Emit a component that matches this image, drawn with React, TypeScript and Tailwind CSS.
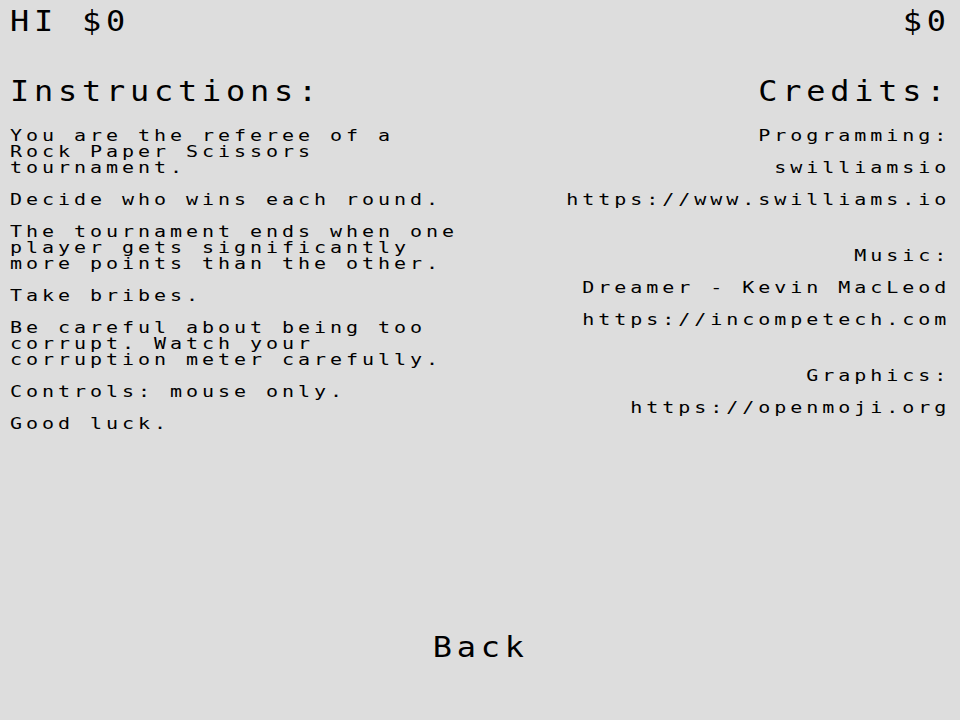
import React from 'react'

const instructions: string[][] = [
  ['You are the referee of a', 'Rock Paper Scissors', 'tournament.'],
  ['Decide who wins each round.'],
  ['The tournament ends when one', 'player gets significantly', 'more points than the other.'],
  ['Take bribes.'],
  ['Be careful about being too', 'corrupt. Watch your', 'corruption meter carefully.'],
  ['Controls: mouse only.'],
  ['Good luck.'],
]

const credits: string[][] = [
  ['Programming:', 'swilliamsio', 'https://www.swilliams.io'],
  ['Music:', 'Dreamer - Kevin MacLeod', 'https://incompetech.com'],
  ['Graphics:', 'https://openmoji.org'],
]

// pixel-ish look: mono font stretched horizontally, 16px cells for body, 24px for big text
const big = 'text-[29px] leading-[24px] tracking-[4.36px] scale-x-110'
const small = 'text-[16px] leading-[16px] tracking-[3.17px] scale-x-125'

export default function App() {
  return (
    <div className="w-[960px] h-[720px] bg-[#dddddd] text-black flex flex-col font-['DejaVu_Sans_Mono',monospace] overflow-hidden">
      <div className="flex justify-between pt-[9px] pl-[10px] pr-[9px] whitespace-pre">
        <span className={`${big} origin-left`}>HI $0</span>
        <span className={`${big} origin-right`}>$0</span>
      </div>

      <div className="flex justify-between mt-[46px]">
        <div className="pl-[10px]">
          <h1 className={`${big} origin-left`}>Instructions:</h1>
          <div className={`${small} origin-left mt-[25px] flex flex-col gap-[16px]`}>
            {instructions.map((p, i) => (
              <div key={i}>
                {p.map((line) => (
                  <div key={line} className="whitespace-pre">{line}</div>
                ))}
              </div>
            ))}
          </div>
        </div>

        <div className="pr-[10px] text-right">
          <h1 className={`${big} origin-right`}>Credits:</h1>
          <div className={`${small} origin-right mt-[25px] flex flex-col gap-[40px]`}>
            {credits.map((group, i) => (
              <div key={i} className="flex flex-col gap-[16px]">
                {group.map((line) => (
                  <div key={line} className="whitespace-pre">{line}</div>
                ))}
              </div>
            ))}
          </div>
        </div>
      </div>

      <div className="mt-auto mb-[61px] flex justify-center pl-[2px]">
        <span className={`${big} origin-center`}>Back</span>
      </div>
    </div>
  )
}
